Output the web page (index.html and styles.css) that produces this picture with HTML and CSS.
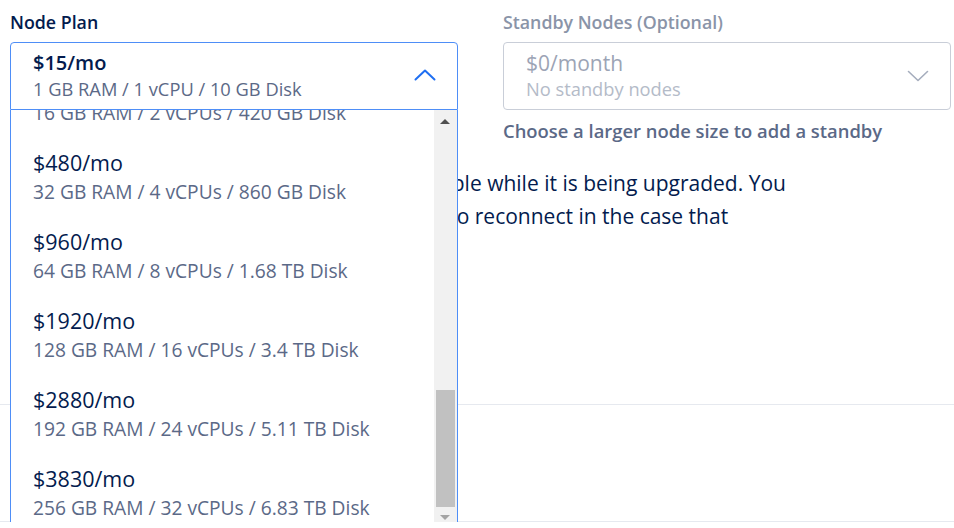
FILE: index.html
```html
<!DOCTYPE html>
<html lang="en">
<head>
<meta charset="utf-8">
<title>Resize cluster</title>
<link rel="stylesheet" href="styles.css">
</head>
<body>
  <section class="section section-plan">
    <div class="fields">
      <div class="field">
        <label class="label">Node Plan</label>
        <div class="select-wrap">
          <div class="select select-open">
            <div class="select-text">
              <div class="select-price">$15/mo</div>
              <div class="select-spec">1 GB RAM / 1 vCPU / 10 GB Disk</div>
            </div>
            <svg class="chevron chevron-up" width="22" height="12" viewBox="0 0 22 12" aria-hidden="true">
              <path d="M1.5 10.5 L11 1.5 L20.5 10.5" fill="none" stroke="currentColor" stroke-width="2" stroke-linecap="round" stroke-linejoin="round"/>
            </svg>
          </div>
          <div class="menu">
            <ul class="menu-list">
              <li class="option"><span class="option-price">$240/mo</span><span class="option-spec">16 GB RAM / 2 vCPUs / 420 GB Disk</span></li>
              <li class="option"><span class="option-price">$480/mo</span><span class="option-spec">32 GB RAM / 4 vCPUs / 860 GB Disk</span></li>
              <li class="option"><span class="option-price">$960/mo</span><span class="option-spec">64 GB RAM / 8 vCPUs / 1.68 TB Disk</span></li>
              <li class="option"><span class="option-price">$1920/mo</span><span class="option-spec">128 GB RAM / 16 vCPUs / 3.4 TB Disk</span></li>
              <li class="option"><span class="option-price">$2880/mo</span><span class="option-spec">192 GB RAM / 24 vCPUs / 5.11 TB Disk</span></li>
              <li class="option"><span class="option-price">$3830/mo</span><span class="option-spec">256 GB RAM / 32 vCPUs / 6.83 TB Disk</span></li>
            </ul>
            <div class="scrollbar" aria-hidden="true">
              <span class="scroll-arrow scroll-up"></span>
              <span class="scroll-thumb"></span>
              <span class="scroll-arrow scroll-down"></span>
            </div>
          </div>
        </div>
      </div>
      <div class="field field-disabled">
        <label class="label label-muted">Standby Nodes (Optional)</label>
        <div class="select select-disabled">
          <div class="select-text">
            <div class="select-price">$0/month</div>
            <div class="select-spec">No standby nodes</div>
          </div>
          <svg class="chevron chevron-down" width="22" height="12" viewBox="0 0 22 12" aria-hidden="true">
            <path d="M1.5 1.5 L11 10.5 L20.5 1.5" fill="none" stroke="currentColor" stroke-width="1.6" stroke-linecap="round" stroke-linejoin="round"/>
          </svg>
        </div>
        <p class="hint">Choose a larger node size to add a standby</p>
      </div>
    </div>
    <p class="notice">Your database cluster will be briefly unavailable while it is being upgraded. You may lose existing connections and will need to reconnect in the case that replication falls behind.</p>
  </section>
  <section class="section section-storage"></section>
</body>
</html>
```

FILE: styles.css
```css
* {
  box-sizing: border-box;
}

body {
  margin: 0;
  background: #ffffff;
  font-family: "Open Sans", sans-serif;
  color: #031b4e;
}

.section {
  border-bottom: 1px solid #e6e9ef;
}

.section-plan {
  height: 405px;
  padding: 11px 10px 0 10px;
}

.section-storage {
  height: 117px;
}

.fields {
  display: grid;
  grid-template-columns: 448px 448px;
  column-gap: 45px;
}

.field {
  display: flex;
  flex-direction: column;
}

.label {
  display: block;
  font-size: 17.8px;
  font-weight: 600;
  line-height: 22px;
  margin-bottom: 9px;
  color: #031b4e;
}

.label-muted {
  color: #8a94a8;
}

.select-wrap {
  position: relative;
}

.select {
  display: flex;
  align-items: center;
  justify-content: space-between;
  height: 68px;
  padding: 0 21px 0 22px;
  border: 1px solid #c9ced8;
  border-radius: 4px;
  background: #ffffff;
}

.select-open {
  border-color: #4e8ef7;
  border-radius: 4px 4px 0 0;
}

.select-text {
  display: flex;
  flex-direction: column;
}

.select-price {
  font-size: 20px;
  font-weight: 600;
  line-height: 24px;
}

.select-spec {
  font-size: 18.3px;
  line-height: 24px;
  margin-top: 2px;
  color: #5b6987;
}

.chevron-up {
  color: #1f6ff2;
  margin-top: -2px;
}

.chevron-down {
  color: #a5adbd;
}

.select-disabled .select-price {
  font-size: 21px;
  font-weight: 400;
  color: #9ca4b5;
}

.select-disabled .select-spec {
  color: #b4bbc8;
}

.hint {
  margin: 10px 0 0;
  font-size: 18.4px;
  font-weight: 600;
  line-height: 22px;
  color: #5b6987;
}

.notice {
  margin: 25px 0 0 7px;
  width: 790px;
  font-size: 21px;
  line-height: 33px;
  color: #031b4e;
}

/* open dropdown, drawn over the rest of the form */
.menu {
  position: absolute;
  top: 100%;
  left: 0;
  width: 448px;
  height: 430px;
  border-left: 1px solid #4e8ef7;
  border-right: 1px solid #4e8ef7;
  background: #ffffff;
  overflow: hidden;
  z-index: 5;
}

.menu-list {
  list-style: none;
  margin: -51px 0 0;
  padding: 0 24px 0 0;
}

.option {
  display: flex;
  flex-direction: column;
  padding: 13px 0 13px 22px;
}

.option-price {
  font-size: 21.5px;
  line-height: 24px;
  color: #031b4e;
}

.option-spec {
  font-size: 19.2px;
  line-height: 24px;
  margin-top: 5px;
  color: #5b6987;
}

.scrollbar {
  position: absolute;
  top: 0;
  right: 0;
  bottom: 0;
  width: 23px;
  background: #f1f1f1;
}

.scroll-arrow {
  position: absolute;
  left: 6px;
  width: 0;
  height: 0;
  border-left: 5px solid transparent;
  border-right: 5px solid transparent;
}

.scroll-up {
  top: 9px;
  border-bottom: 5px solid #505050;
}

.scroll-down {
  top: 405px;
  border-top: 5px solid #a3a3a3;
}

.scroll-thumb {
  position: absolute;
  top: 280px;
  left: 2px;
  width: 19px;
  height: 117px;
  background: #c1c1c1;
}
```
